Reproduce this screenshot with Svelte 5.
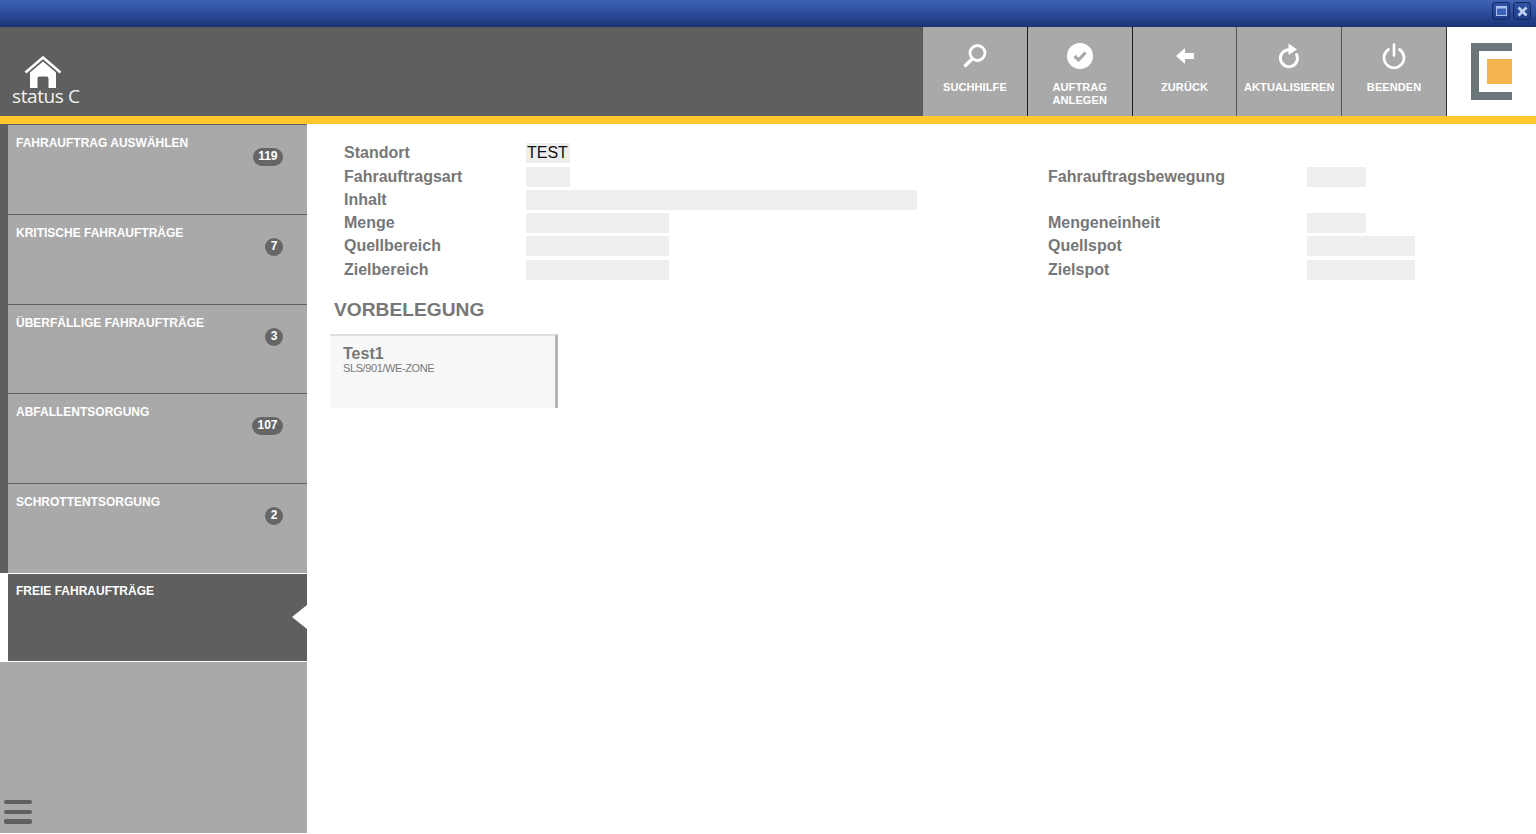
<script>
	const actions = [
		{ id: 'search', label: ['SUCHHILFE'], border: '#555' },
		{ id: 'check', label: ['AUFTRAG', 'ANLEGEN'], border: '#1c1c1c' },
		{ id: 'back', label: ['ZURÜCK'], border: '#1c1c1c' },
		{ id: 'refresh', label: ['AKTUALISIEREN'], border: '#555' },
		{ id: 'power', label: ['BEENDEN'], border: '#555' }
	];

	const menu = [
		{ label: 'FAHRAUFTRAG AUSWÄHLEN', count: 119 },
		{ label: 'KRITISCHE FAHRAUFTRÄGE', count: 7 },
		{ label: 'ÜBERFÄLLIGE FAHRAUFTRÄGE', count: 3 },
		{ label: 'ABFALLENTSORGUNG', count: 107 },
		{ label: 'SCHROTTENTSORGUNG', count: 2 },
		{ label: 'FREIE FAHRAUFTRÄGE', active: true }
	];

	// label, value width, right label, right value width
	const rows = [
		{ label: 'Standort', value: 'TEST', w: 44 },
		{ label: 'Fahrauftragsart', w: 44, right: 'Fahrauftragsbewegung', rw: 59 },
		{ label: 'Inhalt', w: 391 },
		{ label: 'Menge', w: 143, right: 'Mengeneinheit', rw: 59 },
		{ label: 'Quellbereich', w: 143, right: 'Quellspot', rw: 108 },
		{ label: 'Zielbereich', w: 143, right: 'Zielspot', rw: 108 }
	];
</script>

<div class="window">
	<div class="titlebar">
		<button class="winbtn" aria-label="Maximieren">
			<svg width="11" height="10" viewBox="0 0 11 10">
				<rect x="0.5" y="0.5" width="10" height="9" fill="#3a62b8" stroke="#a9c0ea" />
				<rect x="0" y="0" width="11" height="2.500" fill="#a9c0ea" />
			</svg>
		</button>
		<button class="winbtn" aria-label="Schließen">
			<svg width="11" height="11" viewBox="0 0 11 11">
				<path d="M1.500 1.500l8 8M9.500 1.500l-8 8" stroke="#bcd0f3" stroke-width="2.800" />
			</svg>
		</button>
	</div>

	<header>
		<div class="brand">
			<svg class="house" width="38" height="32" viewBox="0 0 38 32">
				<path d="M1.500 16.500L19 1.500l17.500 15" fill="none" stroke="#fff" stroke-width="2.600" />
				<path d="M6 16.500L19 5.500l13 11V32H24.500V22.500q0-2-2-2h-7q-2 0-2 2V32H6z" fill="#fff" />
			</svg>
			<span class="brandname">status C</span>
		</div>
		<div class="actions">
			{#each actions as a}
				<button class="action" style:border-left-color={a.border}>
					<span class="icon">
						{#if a.id === 'search'}
							<svg width="26" height="26" viewBox="0 0 26 26">
								<circle cx="15.500" cy="10" r="7.500" fill="none" stroke="#fff" stroke-width="2.800" />
								<path d="M10 16L3.500 22.500" stroke="#fff" stroke-width="3.400" stroke-linecap="round" />
							</svg>
						{:else if a.id === 'check'}
							<svg width="26" height="26" viewBox="0 0 26 26">
								<circle cx="13" cy="13" r="13" fill="#fff" />
								<path d="M7.500 13l4 4 7-7.500" fill="none" stroke="#a9a9a9" stroke-width="3.200" />
							</svg>
						{:else if a.id === 'back'}
							<svg width="20" height="20" viewBox="0 0 20 20">
								<path d="M1 10l9-8v5h9v6h-9v5z" fill="#fff" />
							</svg>
						{:else if a.id === 'refresh'}
							<svg width="24" height="26" viewBox="0 0 24 26">
								<path d="M19 10.500a8.500 8.500 0 1 1-7-3.800" fill="none" stroke="#fff" stroke-width="3" />
								<path d="M11.500 0.500l8.500 6-8.500 5.500z" fill="#fff" />
							</svg>
						{:else}
							<svg width="26" height="26" viewBox="0 0 26 26">
								<path d="M7.500 6.500a10 10 0 1 0 11 0" fill="none" stroke="#fff" stroke-width="2.700" stroke-linecap="round" />
								<path d="M13 1.500v11" stroke="#fff" stroke-width="2.700" stroke-linecap="round" />
							</svg>
						{/if}
					</span>
					<span class="actionlabel">
						{#each a.label as line}<span>{line}</span>{/each}
					</span>
				</button>
			{/each}
		</div>
		<div class="logobox">
			<div class="logo"><div class="logofill"></div></div>
		</div>
	</header>

	<div class="stripe"></div>

	<div class="body">
		<nav>
			{#each menu as item}
				<div class="item" class:active={item.active}>
					<div class="itemtext">{item.label}</div>
					{#if item.count !== undefined}
						<span class="badge">{item.count}</span>
					{/if}
					{#if item.active}<span class="arrow"></span>{/if}
				</div>
			{/each}
			<div class="navrest">
				<div class="burger"><i></i><i></i><i></i></div>
			</div>
		</nav>

		<main>
			<div class="form">
				{#each rows as r}
					<div class="label">{r.label}</div>
					<div class="cell"><span class="val" style:width="{r.w}px">{r.value ?? ''}</span></div>
					{#if r.right}
						<div class="label">{r.right}</div>
						<div class="cell"><span class="val" style:width="{r.rw}px"></span></div>
					{:else}
						<div></div>
						<div></div>
					{/if}
				{/each}
			</div>

			<h2>VORBELEGUNG</h2>

			<div class="card">
				<div class="cardtitle">Test1</div>
				<div class="cardsub">SLS/901/WE-ZONE</div>
			</div>
		</main>
	</div>
</div>

<style>
	:global(body) {
		margin: 0;
		background: #fff;
		font-family: "Liberation Sans", Arial, sans-serif;
		overflow: hidden;
	}
	.window {
		display: flex;
		flex-direction: column;
		height: 834px;
	}
	.titlebar {
		height: 27px;
		flex: none;
		display: flex;
		justify-content: flex-end;
		align-items: flex-start;
		gap: 3px;
		padding: 2px 5px 0 0;
		box-sizing: border-box;
		background: linear-gradient(#3f62b4, #2d4f9f 45%, #1a3274);
	}
	.winbtn {
		width: 18px;
		height: 18px;
		padding: 0;
		display: flex;
		align-items: center;
		justify-content: center;
		background: linear-gradient(#2f53a6, #1f3c88);
		border: 1px solid #16295f;
		border-radius: 3px;
	}
	header {
		height: 89px;
		flex: none;
		display: flex;
		background: #5f5f5f;
	}
	.brand {
		flex: 1;
		display: flex;
		flex-direction: column;
		align-items: flex-start;
		padding: 29px 0 0 12px;
		box-sizing: border-box;
	}
	.house {
		margin-left: 12px;
		display: block;
	}
	.brandname {
		color: #f2f2f2;
		font-family: "Open Sans", sans-serif;
		font-size: 19px;
		line-height: 20px;
		margin-top: -2px;
		letter-spacing: -0.4px;
	}
	.actions {
		display: flex;
	}
	.action {
		width: 104.8px;
		box-sizing: border-box;
		display: flex;
		flex-direction: column;
		align-items: center;
		padding: 0;
		background: #a9a9a9;
		border: 0;
		border-left: 1px solid #333;
		color: #fff;
		font-family: inherit;
	}
	.icon {
		height: 52px;
		display: flex;
		align-items: center;
		justify-content: center;
		padding-top: 5px;
		box-sizing: border-box;
	}
	.actionlabel {
		display: flex;
		flex-direction: column;
		font-size: 11px;
		font-weight: bold;
		line-height: 13px;
		margin-top: 2px;
		letter-spacing: 0.1px;
	}
	.logobox {
		width: 90px;
		box-sizing: border-box;
		background: #fff;
		border-left: 1px solid #333;
		padding: 16px 0 0 24px;
	}
	.logo {
		width: 41px;
		height: 57px;
		box-sizing: border-box;
		border: 8px solid #6b7678;
		border-right: 0;
		padding: 8px 0 0 8px;
	}
	.logofill {
		width: 25px;
		height: 25px;
		background: #f4b44f;
	}
	.stripe {
		height: 8px;
		flex: none;
		background: #ffc92d;
	}
	.body {
		flex: 1;
		display: flex;
		min-height: 0;
	}
	nav {
		width: 307px;
		flex: none;
		display: flex;
		flex-direction: column;
		margin-bottom: 1px;
	}
	.item {
		position: relative;
		height: 89.75px;
		flex: none;
		box-sizing: border-box;
		background: #a9a9a9;
		border-top: 1px solid #5f5f5f;
		border-left: 8px solid #5f5f5f;
		padding: 11px 8px;
		color: #fff;
	}
	.item.active {
		background: #5f5f5f;
		border-top: 1px solid #fff;
		border-left-color: #fff;
		height: 88.5px;
		padding-top: 10.5px;
	}
	.itemtext {
		font-size: 12px;
		font-weight: bold;
		line-height: 14px;
	}
	.badge {
		position: absolute;
		right: 24px;
		top: 23px;
		min-width: 17px;
		height: 18px;
		box-sizing: border-box;
		padding: 0 5.5px;
		border-radius: 9px;
		background: #666;
		font-size: 12px;
		font-weight: bold;
		line-height: 16px;
		text-align: center;
	}
	.arrow {
		position: absolute;
		right: 0;
		top: 31.5px;
		width: 0;
		height: 0;
		border-style: solid;
		border-width: 12px 15px 12px 0;
		border-color: transparent #fff transparent transparent;
	}
	.navrest {
		flex: 1;
		background: #a9a9a9;
		border-top: 1px solid #fff;
		display: flex;
		align-items: flex-end;
		padding: 0 0 9.5px 4px;
	}
	.burger {
		display: flex;
		flex-direction: column;
		gap: 5.5px;
		width: 28px;
	}
	.burger i {
		display: block;
		height: 4.2px;
		border-radius: 2px;
		background: #5f5f5f;
	}
	main {
		flex: 1;
		min-width: 0;
		padding: 19.3px 0 0 23px;
		color: #777;
	}
	.form {
		display: grid;
		grid-template-columns: 182px 522px 259px 1fr;
		grid-auto-rows: 20px;
		row-gap: 3.25px;
		margin-left: 14px;
	}
	.label {
		font-size: 16px;
		font-weight: bold;
		line-height: 20px;
	}
	.val {
		display: block;
		height: 20px;
		background: #eee;
		color: #111;
		font-size: 16px;
		line-height: 20px;
		padding-left: 1px;
		box-sizing: border-box;
	}
	h2 {
		margin: 18px 0 0 4px;
		font-size: 19.2px;
		line-height: 24px;
		font-weight: bold;
	}
	.card {
		width: 228px;
		height: 74px;
		margin-top: 12px;
		box-sizing: border-box;
		background: #f7f7f7;
		border-top: 2px solid #ddd;
		border-right: 3px solid #b5b5b5;
		padding: 9px 13px;
	}
	.cardtitle {
		font-size: 16px;
		font-weight: bold;
		line-height: 17px;
	}
	.cardsub {
		font-size: 11px;
		line-height: 13px;
		letter-spacing: -0.4px;
	}
</style>
